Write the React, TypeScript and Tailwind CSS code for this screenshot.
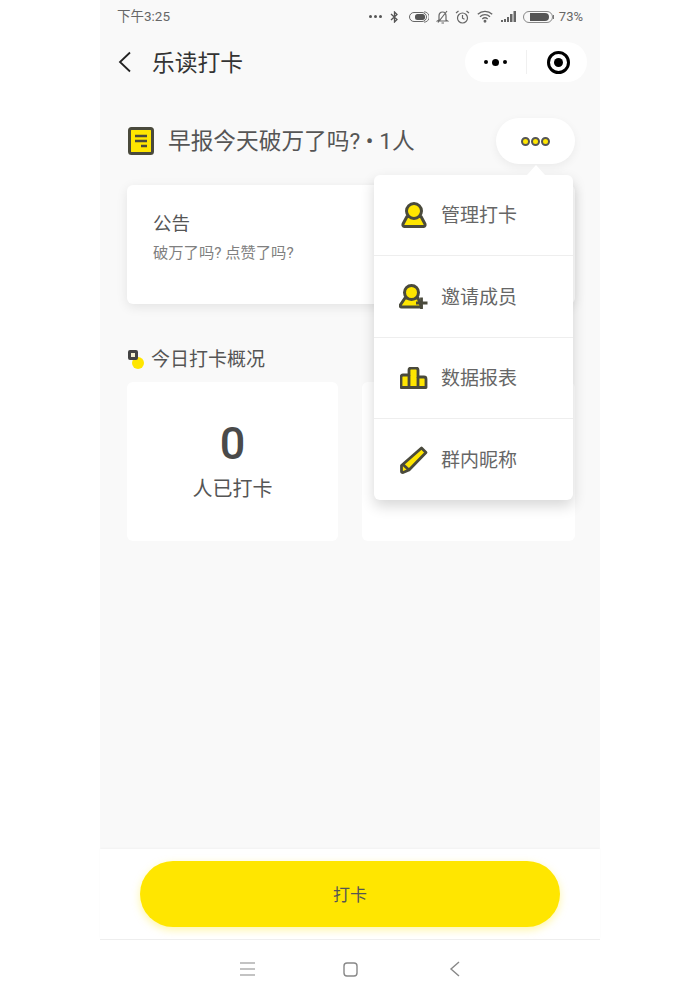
const cjk = "font-['Roboto','Noto_Sans_CJK_SC',sans-serif]";

const ink = '#4a4a3c';
const yellow = '#ffe600';

const NoteIcon = () => (
  <svg width="26" height="28" viewBox="0 0 26 28">
    <rect x="1.500" y="1.500" width="23" height="25" rx="2" fill={yellow} stroke={ink} strokeWidth="3" />
    <path d="M7 9h12M7 14h12M13 19h6" stroke={ink} strokeWidth="2.400" fill="none" />
  </svg>
);

const PersonIcon = () => (
  <svg width="26" height="26" viewBox="0 0 26 26">
    <path d="M6 14.500h14l4 7.500c.4 1-.2 2.500-1.200 2.500H3.200c-1 0-1.600-1.500-1.200-2.500z" fill={yellow} stroke={ink} strokeWidth="3" strokeLinejoin="round" />
    <circle cx="13" cy="9" r="7.500" fill={yellow} stroke={ink} strokeWidth="3" />
  </svg>
);

const PersonPlusIcon = () => (
  <svg width="30" height="26" viewBox="0 0 30 26">
    <path d="M6 14h13l3 7.500v1.500H2.500c-1 0-1.600-1-1.200-2z" fill={yellow} stroke={ink} strokeWidth="3" strokeLinejoin="round" />
    <circle cx="12.500" cy="8.500" r="7" fill={yellow} stroke={ink} strokeWidth="3" />
    <path d="M22.500 13.500v11.500M17 19h11.500" stroke={ink} strokeWidth="2.800" fill="none" />
  </svg>
);

const BarsIcon = () => (
  <svg width="28" height="22" viewBox="0 0 28 22">
    <path d="M3 8h6V3a2 2 0 0 1 2-2h5a2 2 0 0 1 2 2v7h6a2 2 0 0 1 2 2v8.500H1V10a2 2 0 0 1 2-2z" fill={yellow} stroke={ink} strokeWidth="2.800" strokeLinejoin="round" />
    <path d="M9 8v12M18 10v10" stroke={ink} strokeWidth="2.800" fill="none" />
  </svg>
);

const PencilIcon = () => (
  <svg width="28" height="28" viewBox="0 0 28 28">
    <path d="M21.500 2l4.500 4.500L9 24l-6 2.500c-.8 0-1.500-.6-1.500-1.200v-5.800z" fill={yellow} stroke={ink} strokeWidth="2.800" strokeLinejoin="round" />
    <path d="M3 18.500l6 5.500" stroke={ink} strokeWidth="2.800" fill="none" />
  </svg>
);

const StatusIcons = () => (
  <div className="flex items-center">
    <span className="flex gap-[2px]">
      <i className="size-[3px] rounded-full bg-[#555]" />
      <i className="size-[3px] rounded-full bg-[#555]" />
      <i className="size-[3px] rounded-full bg-[#555]" />
    </span>
    {/* bluetooth */}
    <svg className="ml-[7px]" width="11" height="12" viewBox="0 0 11 12" fill="none" stroke="#555" strokeWidth="1.300">
      <path d="M2 3l6 5.500L5.500 11V1L8 3.500 2 9" />
    </svg>
    {/* hd toggle */}
    <svg className="ml-[9px]" width="20" height="12" viewBox="0 0 20 12" fill="none">
      <rect x="0.500" y="1.500" width="17" height="9" rx="4.500" stroke="#666" />
      <rect x="6" y="3" width="10" height="6" rx="2.500" fill="#555" />
      <path d="M15 .8a5.200 5.200 0 0 1 0 10.400" stroke="#777" />
    </svg>
    {/* muted bell */}
    <svg className="ml-[7px]" width="13" height="14" viewBox="0 0 13 14" fill="none" stroke="#666" strokeWidth="1.200">
      <path d="M3 10V6c0-2.500 1.500-4 3.500-4S10 3.500 10 6v4l1.500 1h-10zM5.500 13h2.500M11 1L2 12.500" />
    </svg>
    {/* alarm */}
    <svg className="ml-[6px]" width="15" height="14" viewBox="0 0 15 14" fill="none" stroke="#666" strokeWidth="1.200">
      <circle cx="7.500" cy="8" r="5" />
      <path d="M7.500 5v3.200l2 1M1 3l2.500-2M14 3l-2.500-2" />
    </svg>
    {/* wifi */}
    <svg className="ml-[7px]" width="16" height="13" viewBox="0 0 16 13" fill="none" stroke="#666" strokeWidth="1.300">
      <path d="M.8 4.200a10.500 10.500 0 0 1 14.400 0M3 6.700a7.300 7.300 0 0 1 10 0M5.300 9a4 4 0 0 1 5.400 0" />
      <circle cx="8" cy="11.300" r=".8" fill="#666" />
    </svg>
    {/* signal */}
    <svg className="ml-[8px]" width="16" height="11" viewBox="0 0 16 11" fill="#666">
      <path d="M0 9h2v2H0zM3 8h2v3H3zM6 6h2v5H6zM9 3h2.500v8H9zM12.500 0H15v11h-2.500z" />
    </svg>
    {/* battery */}
    <svg className="ml-[6px]" width="32" height="12" viewBox="0 0 32 12" fill="none">
      <rect x="0.500" y="0.500" width="29" height="11" rx="5.500" stroke="#888" />
      <path d="M7 2h15a4 4 0 0 1 0 8H7z" fill="#555" />
      <path d="M30.500 4v4" stroke="#777" />
    </svg>
    <span className="ml-[4px] text-[13px] text-[#666]">73%</span>
  </div>
);

const menuItems = [
  { label: '管理打卡', icon: <PersonIcon />, h: 'h-[80px]' },
  { label: '邀请成员', icon: <PersonPlusIcon />, h: 'h-[82px]' },
  { label: '数据报表', icon: <BarsIcon />, h: 'h-[81px]' },
  { label: '群内昵称', icon: <PencilIcon />, h: 'h-[82px]' },
];

export default function App() {
  return (
    <div className={`mx-auto flex h-[1000px] w-[500px] flex-col bg-[#f9f9f9] ${cjk}`}>
      {/* status bar */}
      <div className="flex h-[33px] shrink-0 items-center justify-between pl-[17px] pr-[17px] text-[13.500px] text-[#666]">
        <span>下午3:25</span>
        <StatusIcons />
      </div>

      {/* nav */}
      <div className="flex h-[58px] shrink-0 items-center justify-between pl-[18px] pr-[13px]">
        <div className="flex items-center">
          <svg width="13" height="22" viewBox="0 0 13 22" fill="none" stroke="#222" strokeWidth="1.800">
            <path d="M12 1.500L2 11l10 9.500" />
          </svg>
          <span className="ml-[21px] pt-[3px] text-[22.750px] leading-[30px] text-[#333]">乐读打卡</span>
        </div>
        <div className="flex h-[40px] w-[122px] items-center rounded-full bg-white">
          <div className="flex w-[61px] items-center justify-center gap-[4px]">
            <i className="size-[4px] rounded-full bg-black" />
            <i className="size-[7px] rounded-full bg-black" />
            <i className="size-[4px] rounded-full bg-black" />
          </div>
          <div className="h-[24px] w-px bg-[#f0f0f0]" />
          <div className="flex flex-1 items-center justify-center pl-[2px]">
            <div className="flex size-[23px] items-center justify-center rounded-full border-[3px] border-black">
              <i className="size-[9px] rounded-full bg-black" />
            </div>
          </div>
        </div>
      </div>

      {/* content */}
      <div className="relative flex flex-1 flex-col pl-[27px] pr-[25px]">
        <div className="flex h-[94px] items-center pl-[1px] pt-[6px]">
          <NoteIcon />
          <span className="ml-[14px] pt-[2px] text-[22.700px] text-[#555]">早报今天破万了吗? • 1人</span>
        </div>

        <div className="h-[119px] rounded-[6px] bg-white px-[26px] pt-[27px] shadow-[0_3px_12px_rgba(0,0,0,0.09)]">
          <div className="text-[18.500px] leading-[24px] text-[#555]">公告</div>
          <div className="mt-[7px] text-[15.300px] leading-[20px] text-[#808080]">破万了吗? 点赞了吗?</div>
        </div>

        <div className="mt-[43px] flex h-[24px] items-center">
          <div className="relative size-[16px] shrink-0 -translate-y-[1px]">
            <div className="absolute bottom-[-3px] right-[-1px] size-[12px] rounded-full bg-[#ffe600]" />
            <div className="absolute left-[1px] top-0 size-[10px] rounded-[2px] border-[3px] border-[#444] bg-[#f4f0d0]" />
          </div>
          <span className="ml-[8px] pt-[2px] text-[19px] leading-[24px] text-[#555]">今日打卡概况</span>
        </div>

        <div className="mt-[11px] grid grid-cols-[211px_213px] gap-[24px]">
          <div className="flex h-[159px] flex-col items-center rounded-[6px] bg-white pt-[35px]">
            <div className="text-[45px] font-medium leading-[54px] text-[#4a4a4a]">0</div>
            <div className="mt-[5px] text-[20px] leading-[26px] text-[#555]">人已打卡</div>
          </div>
          <div className="h-[159px] rounded-[6px] bg-white" />
        </div>

        {/* more button + popup menu */}
        <div className="absolute right-[25px] top-[27px] flex h-[46px] w-[79px] items-center justify-center gap-[1px] rounded-full bg-white shadow-[0_3px_10px_rgba(0,0,0,0.06)]">
          <i className="size-[9px] rounded-full border-[2px] border-[#555] bg-[#ffe600]" />
          <i className="size-[9px] rounded-full border-[2px] border-[#555] bg-[#ffe600]" />
          <i className="size-[9px] rounded-full border-[2px] border-[#555] bg-[#ffe600]" />
        </div>
        <div className="absolute left-[274px] top-[84px] w-[199px] rounded-[6px] bg-white shadow-[0_6px_14px_rgba(0,0,0,0.16)]">
          <div className="absolute -top-[10px] left-[153px] size-0 border-x-[9px] border-b-[10px] border-x-transparent border-b-white" />
          {menuItems.map((item, i) => (
            <div
              key={item.label}
              className={`flex items-center ${item.h} ${i > 0 ? 'border-t border-[#eeeeee]' : ''}`}
            >
              <div className="flex w-[67px] shrink-0 items-center justify-center pl-[12px]">{item.icon}</div>
              <span className="pt-[3px] text-[19px] text-[#666]">{item.label}</span>
            </div>
          ))}
        </div>
      </div>

      {/* bottom bar */}
      <div className="flex h-[90px] shrink-0 items-start justify-center bg-white pt-[12px] shadow-[0_-1px_2px_rgba(0,0,0,0.03)]">
        <button className="flex h-[66px] w-[420px] items-center justify-center rounded-[33px] bg-[#ffe600] pt-[3px] text-[17px] text-[#555] shadow-[0_3px_8px_rgba(255,230,0,0.35)]">
          打卡
        </button>
      </div>

      {/* android nav */}
      <div className="flex h-[61px] shrink-0 items-start justify-center border-t border-[#eeeeee] bg-white pt-[21px]">
        <div className="flex w-[220px] items-center justify-between">
          <svg width="15" height="14" viewBox="0 0 15 14" fill="none" stroke="#888" strokeWidth="1.200">
            <path d="M0 1h15M0 7h15M0 13h15" />
          </svg>
          <svg className="-translate-x-[2px]" width="15" height="15" viewBox="0 0 15 15" fill="none" stroke="#888" strokeWidth="1.400">
            <rect x="1" y="1" width="13" height="13" rx="3" />
          </svg>
          <svg width="11" height="16" viewBox="0 0 11 16" fill="none" stroke="#888" strokeWidth="1.400">
            <path d="M10 1L2 8l8 7" />
          </svg>
        </div>
      </div>
    </div>
  );
}
